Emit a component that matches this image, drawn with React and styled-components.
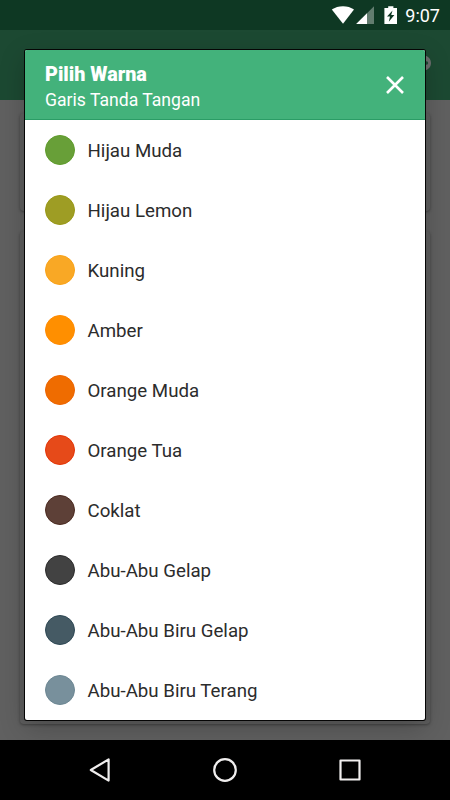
import React from "react";
import styled, { createGlobalStyle } from "styled-components";

const HeaderGreen = "#43b27b";
const Ink = "#2c2c2c";

const GlobalStyle = createGlobalStyle`
  * {
    box-sizing: border-box;
  }
  body {
    margin: 0;
    background: #000;
    font-family: Roboto, "Liberation Sans", sans-serif;
  }
`;

const Screen = styled.div`
  position: relative;
  display: flex;
  flex-direction: column;
  width: 450px;
  height: 800px;
  overflow: hidden;
`;

const StatusBar = styled.header`
  display: flex;
  flex: 0 0 30px;
  align-items: center;
  justify-content: flex-end;
  padding-right: 10px;
  color: #fff;
  background: #0e3823;
`;

const StatusIcons = styled.svg`
  display: block;
  margin-right: 7px;
`;

const Clock = styled.span`
  padding-top: 2px;
  font-size: 18px;
  font-weight: 450;
  line-height: 26px;
`;

const Toolbar = styled.div`
  display: flex;
  flex: 0 0 70px;
  align-items: center;
  justify-content: flex-end;
  padding: 0 19px 5px 0;
  background: #1c4932;
`;

const Page = styled.main`
  display: flex;
  flex: 1;
  flex-direction: column;
  gap: 20px;
  padding: 13px 20px 16px;
  background: #606060;
`;

const Card = styled.section`
  flex: ${({ $height }) => ($height ? `0 0 ${$height}px` : "1")};
  border-radius: 4px;
  background: #5e5e5e;
  box-shadow: 0 1px 3px rgba(0, 0, 0, 0.35);
`;

const NavBar = styled.nav`
  display: flex;
  flex: 0 0 60px;
  align-items: center;
  justify-content: center;
  gap: 95px;
  background: #000;
  svg {
    display: block;
    fill: none;
    stroke: #f0eeee;
    stroke-width: 2.2;
    stroke-linejoin: round;
  }
`;

const Dialog = styled.div`
  position: absolute;
  top: 50px;
  left: 25px;
  display: flex;
  flex-direction: column;
  width: 400px;
  height: 670px;
  border-radius: 2px;
  background: #fff;
  box-shadow: 0 0 0 1px #050505, 0 8px 26px rgba(0, 0, 0, 0.22);
`;

const DialogHeader = styled.div`
  display: flex;
  flex: 0 0 70px;
  align-items: center;
  justify-content: space-between;
  padding: 0 20px;
  color: #fff;
  background: ${HeaderGreen};
  border-bottom: 1px solid #2b9c66;
  border-radius: 2px 2px 0 0;
`;

const Heading = styled.div`
  padding-top: 4px;
`;

const Title = styled.h1`
  margin: 0;
  font-size: 19.8px;
  font-weight: 900;
  line-height: 26px;
`;

const Subtitle = styled.p`
  margin: 0;
  font-size: 17.6px;
  line-height: 24px;
`;

const CloseButton = styled.button`
  appearance: none;
  width: 20px;
  height: 20px;
  padding: 0;
  border: none;
  background: transparent;
  svg {
    display: block;
  }
`;

const ColorList = styled.ul`
  margin: 0;
  padding: 0;
  list-style: none;
`;

const ColorRow = styled.li`
  display: flex;
  align-items: center;
  height: 60px;
  padding: 0 20px;
`;

const Swatch = styled.span`
  width: 30px;
  height: 30px;
  margin-right: 12.5px;
  border: 1px solid ${({ $edge }) => $edge};
  border-radius: 50%;
  background: ${({ $color }) => $color};
`;

const ColorName = styled.span`
  padding-top: 2px;
  color: ${Ink};
  font-size: 18.7px;
  line-height: 24px;
`;

const colors = [
  { name: "Hijau Muda", color: "#689f38", edge: "#5f9c2b" },
  { name: "Hijau Lemon", color: "#9e9d24", edge: "#999816" },
  { name: "Kuning", color: "#f9a825", edge: "#f9a217" },
  { name: "Amber", color: "#ff8f00", edge: "#ff8a00" },
  { name: "Orange Muda", color: "#ef6c00", edge: "#ed6300" },
  { name: "Orange Tua", color: "#e64a19", edge: "#e43406" },
  { name: "Coklat", color: "#5d4037", edge: "#4b2a20" },
  { name: "Abu-Abu Gelap", color: "#424242", edge: "#2c2c2c" },
  { name: "Abu-Abu Biru Gelap", color: "#455a64", edge: "#2e4854" },
  { name: "Abu-Abu Biru Terang", color: "#78909c", edge: "#6d8793" }
];

const Status = () => (
  <StatusBar>
    <StatusIcons width="67" height="20" viewBox="0 0 67 20">
      {/* wifi */}
      <path d="M0.8 4.6C7 0 17 0 23 4.6L12 18.8Z" fill="#fff" />
      {/* signal */}
      <path d="M43 1.2V19H25.2Z" fill="#fff" fillOpacity="0.35" />
      <path d="M36 8.2V19H25.2Z" fill="#fff" />
      {/* charging battery */}
      <path
        d="M57.2 1.2H62.4V3H66V19H53.4V3H57.2Z"
        fill="#fff"
      />
      <path d="M61.5 5.5L56 11.6H59L57.8 16.8L63.4 10H60.2Z" fill="#0e3823" />
    </StatusIcons>
    <Clock>9:07</Clock>
  </StatusBar>
);

const App = () => (
  <>
    <GlobalStyle />
    <Screen>
      <Status />
      <Toolbar>
        <svg width="24" height="16" viewBox="0 0 24 16">
          <path
            d="M0 0.5H16C21 0.5 24 3.8 24 8S21 15.5 16 15.5H0ZM19.5 6.3A1.7 1.7 0 1 0 19.5 9.7A1.7 1.7 0 1 0 19.5 6.3Z"
            fill="#6b6d6d"
            fillRule="evenodd"
          />
        </svg>
      </Toolbar>
      <Page>
        <Card $height={98} />
        <Card />
      </Page>
      <NavBar>
        <svg width="30" height="30" viewBox="0 0 30 30">
          <path d="M23.6 4.4V25.6L5.8 15Z" />
        </svg>
        <svg width="30" height="30" viewBox="0 0 30 30">
          <circle cx="15" cy="15" r="10.8" />
        </svg>
        <svg width="30" height="30" viewBox="0 0 30 30">
          <rect x="5.5" y="5.5" width="19" height="19" />
        </svg>
      </NavBar>
      <Dialog>
        <DialogHeader>
          <Heading>
            <Title>Pilih Warna</Title>
            <Subtitle>Garis Tanda Tangan</Subtitle>
          </Heading>
          <CloseButton>
            <svg width="20" height="20" viewBox="0 0 20 20">
              <path
                d="M2 2L18 18M18 2L2 18"
                stroke="#fff"
                strokeWidth="2.6"
              />
            </svg>
          </CloseButton>
        </DialogHeader>
        <ColorList>
          {colors.map(({ name, color, edge }) => (
            <ColorRow key={name}>
              <Swatch $color={color} $edge={edge} />
              <ColorName>{name}</ColorName>
            </ColorRow>
          ))}
        </ColorList>
      </Dialog>
    </Screen>
  </>
);

export default App;
